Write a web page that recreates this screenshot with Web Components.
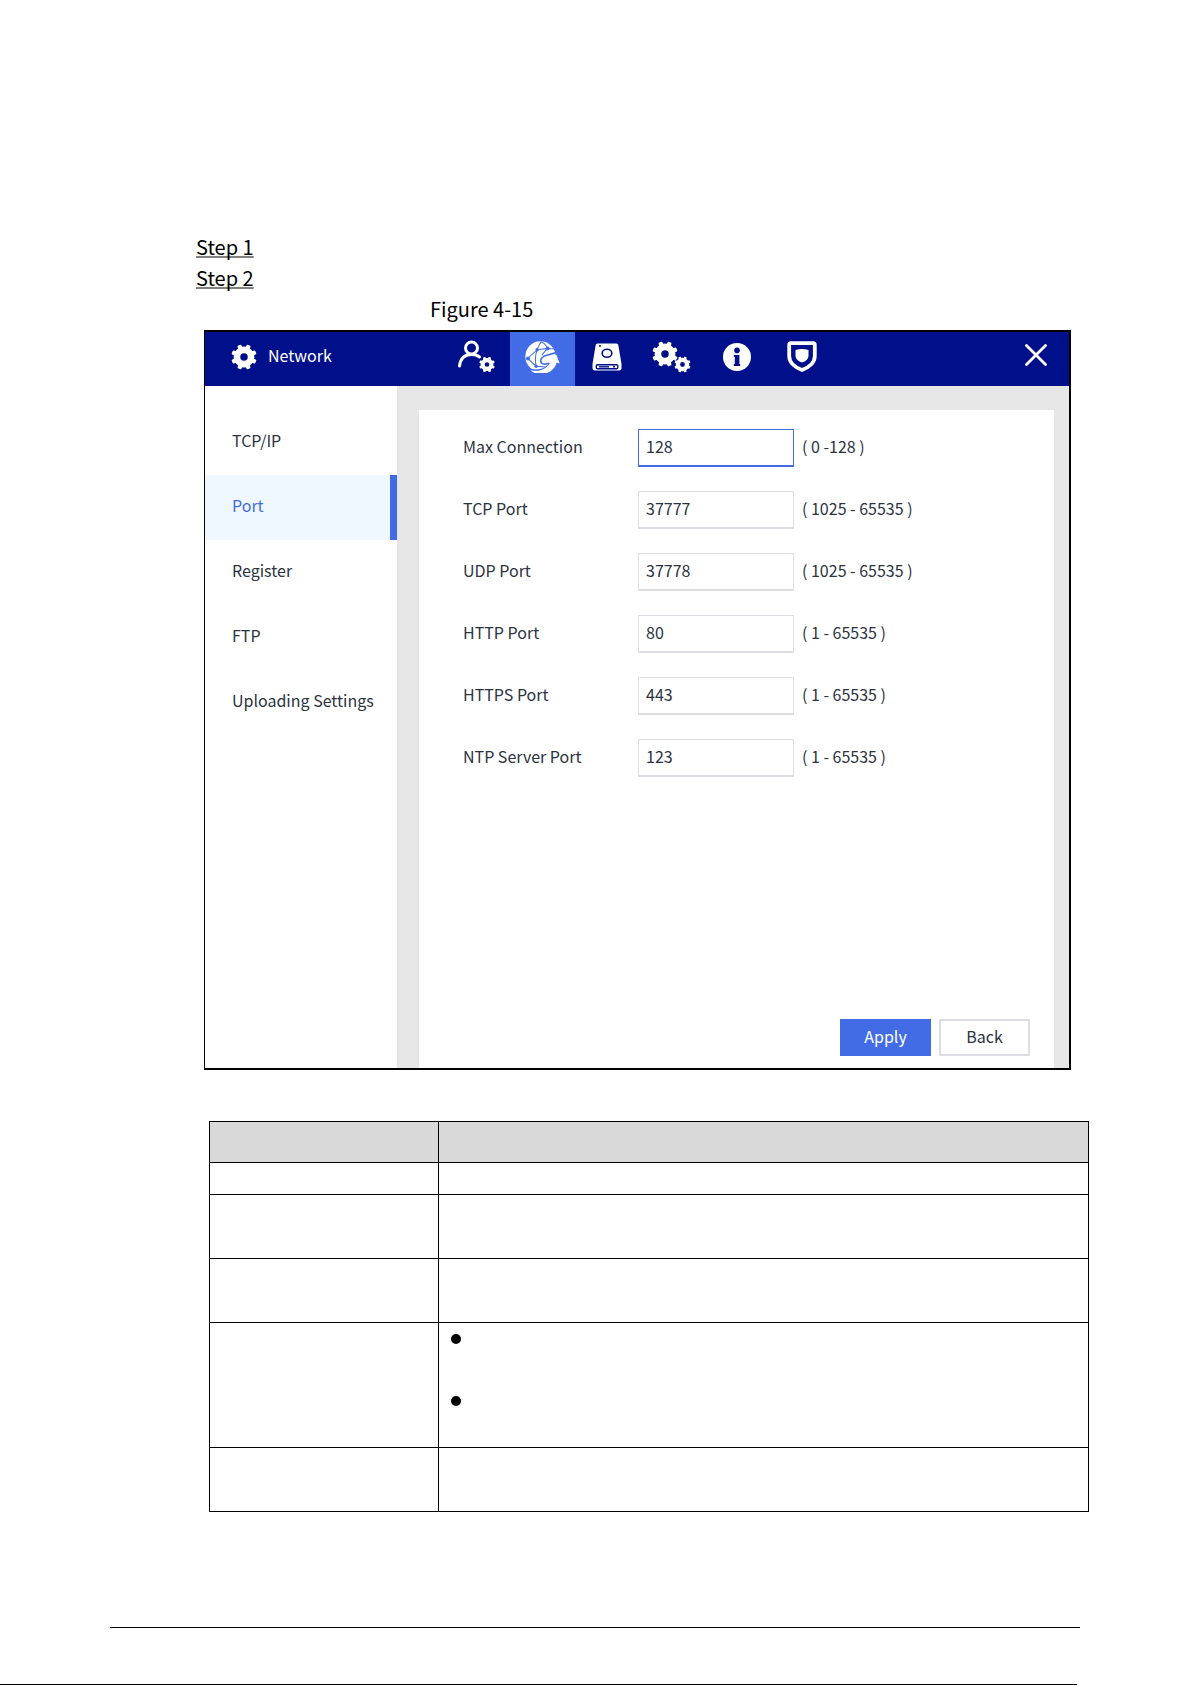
<!DOCTYPE html>
<html lang="en">
<head>
<meta charset="utf-8">
<title>Port settings</title>
<style>
    body {
        margin: 0;
        background: #fff;
        color: #000;
        font-family: "Noto Sans CJK SC", "Noto Sans", sans-serif;
        font-size: 16px;
    }
</style>
</head>
<body>

<manual-page>
    <step-label>Step 1</step-label>
    <step-label>Step 2</step-label>
    <figure-caption>Figure 4-15</figure-caption>
    <settings-dialog>
        <dialog-header slot="header" heading="Network"></dialog-header>
        <side-nav slot="nav"></side-nav>
        <port-form>
            <port-field label="Max Connection" value="128" range="( 0 -128 )" active></port-field>
            <port-field label="TCP Port" value="37777" range="( 1025 - 65535 )"></port-field>
            <port-field label="UDP Port" value="37778" range="( 1025 - 65535 )"></port-field>
            <port-field label="HTTP Port" value="80" range="( 1 - 65535 )"></port-field>
            <port-field label="HTTPS Port" value="443" range="( 1 - 65535 )"></port-field>
            <port-field label="NTP Server Port" value="123" range="( 1 - 65535 )"></port-field>
        </port-form>
    </settings-dialog>
    <param-table></param-table>
    <page-footer slot="footer"></page-footer>
</manual-page>

<script>
class BaseElement extends HTMLElement {

    constructor(){
        super();
        this.shadow = this.attachShadow({ mode: 'open' });
    }

    connectedCallback(){
        this.render();
    }
}

// ring with eight teeth around it
function gear(cx, cy, size) {
    let teeth = "";
    for (let i = 0; i < 8; i++) {
        teeth += `<path d="M-2.5 -8 L-1.9 -11.6 Q-1.8 -12.2 -1.2 -12.2 H1.2 Q1.8 -12.2 1.9 -11.6 L2.5 -8 Z" transform="rotate(${i * 45 + 22.5})"/>`;
    }
    return `<g transform="translate(${cx} ${cy}) scale(${size / 24})" fill="#fff">
        <circle r="6.8" fill="none" stroke="#fff" stroke-width="6.4"/>${teeth}</g>`;
}

const ICONS = {
    gear: { box: "0 0 26 26", width: 26, body: gear(13, 13, 25) },
    user: {
        box: "0 0 40 34", width: 40,
        body: `<circle cx="14.5" cy="8" r="6" fill="none" stroke="#fff" stroke-width="3"/>
            <path d="M2.5 26 C3.5 18 8 14.6 14.5 14.6 C18 14.6 20.5 15.4 22.5 17" fill="none" stroke="#fff" stroke-width="3" stroke-linecap="round"/>
            ${gear(30, 24.5, 15.5)}`
    },
    globe: {
        box: "0 0 104 98", width: 35,
        body: `<circle cx="46" cy="46" r="45" fill="#fff"/>
            <g fill="none" stroke="#426ce6" stroke-width="3">
                <path d="M48 2 C44 10 38 18 36 26 L8 52 L33 75 L60 77 M48 2 C58 6 64 14 67 22 L92 24 M36 26 L67 22 L50 42 M36 26 C30 42 30 60 33 75"/>
            </g>
            <g fill="#426ce6">
                <circle cx="36" cy="26" r="5"/>
                <circle cx="67" cy="22" r="6"/>
                <circle cx="9" cy="52" r="6"/>
                <circle cx="33" cy="75" r="5"/>
                <path d="M70 66 C62 78 52 83 38 84 L10 84 L26 99 L104 99 V66 Z"/>
            </g>
            <path d="M54 57 C60 49 74 48 93 41 L103 67 L94 64 C88 86 70 98 46 98 C32 98 22 93 16 87 C42 93 66 84 76 60 Z" fill="#fff"/>
            <path d="M98 33 L62 43 C42 50 42 68 60 69 L72 66" fill="none" stroke="#426ce6" stroke-width="5"/>`
    },
    disk: {
        box: "0 0 30 28", width: 30,
        body: `<path d="M5.5 .5 H24.5 Q26 .5 26.3 2 L29.5 21 V25 Q29.5 27.5 27 27.5 H3 Q.5 27.5 .5 25 V21 L3.7 2 Q4 .5 5.5 .5 Z" fill="#fff"/>
            <ellipse cx="15" cy="10.3" rx="4.8" ry="4" fill="none" stroke="#000f8a" stroke-width="1.6"/>
            <circle cx="8" cy="3" r="1" fill="#000f8a"/>
            <rect x="4.3" y="21.8" width="21.5" height="4" rx="1.2" fill="none" stroke="#000f8a" stroke-width="1.4"/>
            <path d="M7 23.8 H17" stroke="#000f8a" stroke-width="1.4"/>
            <circle cx="22" cy="23.8" r="1" fill="#000f8a"/>`
    },
    gears: { box: "0 0 40 34", width: 40, body: gear(13, 14, 25) + gear(30.5, 24.5, 16) },
    info: {
        box: "0 0 28 28", width: 28,
        body: `<circle cx="14" cy="14" r="14" fill="#fff"/>
            <circle cx="14" cy="7.4" r="2.8" fill="#000f8a"/>
            <path d="M10.8 12 H16.4 V21 H17.2 V23 H10.8 V21 H11.8 V14 H10.8 Z" fill="#000f8a"/>`
    },
    shield: {
        box: "0 0 30 32", width: 30,
        body: `<path d="M2.2 3.8 Q2.2 2.2 3.8 2.2 H26.2 Q27.8 2.2 27.8 3.8 V15 C27.8 21.5 22 26.5 15 29 C8 26.5 2.2 21.5 2.2 15 Z" fill="none" stroke="#fff" stroke-width="3.8"/>
            <path d="M8.5 9 Q15 7 21.5 9 V14.5 C21.5 18 18.5 20.4 15 21.6 C11.5 20.4 8.5 18 8.5 14.5 Z" fill="#fff"/>`
    },
    close: {
        box: "0 0 22 22", width: 22,
        body: `<path d="M1.5 1.5 L20.5 20.5 M20.5 1.5 L1.5 20.5" stroke="#fff" stroke-width="2.8" stroke-linecap="round"/>`
    }
};

class AppIcon extends BaseElement {
    render() {
        let icon = ICONS[this.getAttribute("name")];
        this.shadow.innerHTML =
        `
        <style>
            :host { display: block; }
            svg { display: block; }
        </style>
        <svg viewBox="${icon.box}" width="${icon.width}" aria-hidden="true">${icon.body}</svg>
        `
    }
}

class ManualPage extends BaseElement {
    render() {
        this.shadow.innerHTML =
        `
        <style>
            :host {
                display: flex;
                flex-direction: column;
            }
            main {
                padding: 231px 103px 0 196px;
            }
        </style>
        <main><slot></slot></main>
        <slot name="footer"></slot>
        `
    }
}

class StepLabel extends BaseElement {
    render() {
        this.shadow.innerHTML =
        `
        <style>
            :host {
                display: block;
                font-size: 20px;
                line-height: 31px;
            }
            span {
                text-decoration: underline 2px #7f7f7f;
                text-decoration-skip-ink: none;
                text-underline-offset: 1px;
            }
        </style>
        <span><slot></slot></span>
        `
    }
}

class FigureCaption extends BaseElement {
    render() {
        this.shadow.innerHTML =
        `
        <style>
            :host {
                display: block;
                padding-left: 234px;
                font-size: 20px;
                line-height: 31px;
            }
        </style>
        <slot></slot>
        `
    }
}

class SettingsDialog extends BaseElement {
    render() {
        this.shadow.innerHTML =
        `
        <style>
            :host {
                display: block;
                margin: 6px 18px 0 8px;
                border: 2px solid #000;
                border-left-width: 1px;
                color: #2b333f;
            }
            .body {
                display: flex;
                min-height: 682px;
            }
            .content {
                flex: 1;
                display: flex;
                padding: 24px 15px 0 22px;
                background: #e6e6e6;
            }
        </style>
        <slot name="header"></slot>
        <div class="body">
            <slot name="nav"></slot>
            <div class="content"><slot></slot></div>
        </div>
        `
    }
}

class DialogHeader extends BaseElement {
    render() {
        let tabs = [
            ["user", "Account"],
            ["globe", "Network"],
            ["disk", "Storage"],
            ["gears", "System"],
            ["info", "Information"],
            ["shield", "Security"]
        ];

        this.shadow.innerHTML =
        `
        <style>
            :host {
                display: flex;
                height: 54px;
                background: #000f8a;
                color: #fff;
            }
            .heading {
                display: flex;
                align-items: center;
                gap: 11px;
                width: 214px;
                padding: 0 0 4px 26px;
            }
            h1 {
                margin: 0;
                padding-bottom: 4px;
                font-size: 16px;
                font-weight: 400;
                line-height: 24px;
            }
            nav {
                display: flex;
            }
            button {
                display: flex;
                align-items: center;
                justify-content: center;
                width: 65px;
                padding: 0 1px 4px 0;
                border: 0;
                background: transparent;
                cursor: pointer;
            }
            button.active {
                background: #426ce6;
            }
            .close {
                width: 22px;
                margin: 0 22px 0 auto;
                padding: 0 0 8px;
            }
        </style>
        <div class="heading">
            <app-icon name="gear"></app-icon>
            <h1>${this.getAttribute("heading")}</h1>
        </div>
        <nav>
            ${tabs.map(([icon, title]) => `<button type="button" aria-label="${title}"><app-icon name="${icon}"></app-icon></button>`).join("")}
        </nav>
        <button type="button" class="close" aria-label="Close"><app-icon name="close"></app-icon></button>
        `

        let buttons = this.shadow.querySelectorAll("nav button");
        buttons[1].classList.add("active");

        buttons.forEach((button) => {
            button.addEventListener("click", () => {
                buttons.forEach((other) => other.classList.toggle("active", other === button));
            })
        })
    }
}

class SideNav extends BaseElement {
    render() {
        this.shadow.innerHTML =
        `
        <style>
            :host {
                display: block;
                width: 192px;
                padding-top: 24px;
                box-sizing: border-box;
                background: #fff;
            }
            a {
                display: block;
                padding: 0 0 4px 27px;
                color: inherit;
                line-height: 61px;
                text-decoration: none;
                white-space: nowrap;
            }
            a.active {
                border-right: 7px solid #426ce6;
                background: #eff7ff;
                color: #426ce6;
            }
        </style>
        <a href="#tcpip">TCP/IP</a>
        <a href="#port" class="active">Port</a>
        <a href="#register">Register</a>
        <a href="#ftp">FTP</a>
        <a href="#uploading">Uploading Settings</a>
        `
    }
}

class PortForm extends BaseElement {
    render() {
        this.shadow.innerHTML =
        `
        <style>
            :host {
                flex: 1;
                display: flex;
            }
            form {
                flex: 1;
                display: flex;
                flex-direction: column;
                justify-content: space-between;
                padding: 19px 24px 12px 44px;
                background: #fff;
            }
            .fields {
                display: flex;
                flex-direction: column;
                gap: 24px;
            }
            .actions {
                display: flex;
                justify-content: flex-end;
                gap: 8px;
            }
            button {
                width: 91px;
                height: 37px;
                padding: 0 0 4px;
                border: 2px solid #dddde6;
                background: #fff;
                color: inherit;
                font: inherit;
                line-height: 24px;
            }
            .primary {
                border-color: #426ce6;
                background: #426ce6;
                color: #fff;
            }
        </style>
        <form>
            <div class="fields"><slot></slot></div>
            <div class="actions">
                <button type="button" class="primary">Apply</button>
                <button type="button">Back</button>
            </div>
        </form>
        `
    }
}

class PortField extends BaseElement {
    render() {
        this.shadow.innerHTML =
        `
        <style>
            :host {
                display: flex;
                align-items: center;
                line-height: 24px;
            }
            label, span {
                padding-bottom: 4px;
            }
            label {
                width: 175px;
            }
            input {
                width: 156px;
                height: 38px;
                box-sizing: border-box;
                margin: 0 8px 0 0;
                padding: 0 7px 4px;
                border: 1px solid #dddde6;
                border-bottom-width: 2px;
                border-radius: 0;
                outline: 0;
                color: inherit;
                font: inherit;
            }
            :host([active]) input {
                border-color: #426ce6;
            }
        </style>
        <label for="value">${this.getAttribute("label")}</label>
        <input id="value" type="text" inputmode="numeric" value="${this.getAttribute("value")}">
        <span>${this.getAttribute("range")}</span>
        `
    }
}

class ParamTable extends BaseElement {
    render() {
        this.shadow.innerHTML =
        `
        <style>
            :host {
                display: block;
                margin: 51px 0 0 13px;
            }
            table {
                width: 100%;
                border-collapse: collapse;
                table-layout: fixed;
            }
            col.name {
                width: 229px;
            }
            th, td {
                height: 63px;
                padding: 0;
                border: 1px solid #000;
                vertical-align: top;
            }
            th {
                height: 40px;
                background: #d9d9d9;
            }
            .short td {
                height: 31px;
            }
            ul {
                margin: 0;
                padding: 0 0 0 12px;
                list-style: none;
            }
            li {
                height: 62px;
                padding-top: 11px;
                box-sizing: border-box;
            }
            li::before {
                content: "";
                display: block;
                width: 10px;
                height: 10px;
                border-radius: 50%;
                background: #000;
            }
        </style>
        <table>
            <colgroup><col class="name"><col></colgroup>
            <thead><tr><th></th><th></th></tr></thead>
            <tbody>
                <tr class="short"><td></td><td></td></tr>
                <tr><td></td><td></td></tr>
                <tr><td></td><td></td></tr>
                <tr><td></td><td><ul><li></li><li></li></ul></td></tr>
                <tr><td></td><td></td></tr>
            </tbody>
        </table>
        `
    }
}

class PageFooter extends BaseElement {
    render() {
        this.shadow.innerHTML =
        `
        <style>
            :host {
                display: block;
            }
            hr {
                margin: 115px 112px 56px 110px;
                border: 0;
                border-top: 1px solid #000;
            }
            hr.edge {
                margin: 0 115px 0 0;
            }
        </style>
        <hr>
        <hr class="edge">
        `
    }
}

customElements.define('app-icon', AppIcon);
customElements.define('manual-page', ManualPage);
customElements.define('step-label', StepLabel);
customElements.define('figure-caption', FigureCaption);
customElements.define('settings-dialog', SettingsDialog);
customElements.define('dialog-header', DialogHeader);
customElements.define('side-nav', SideNav);
customElements.define('port-form', PortForm);
customElements.define('port-field', PortField);
customElements.define('param-table', ParamTable);
customElements.define('page-footer', PageFooter);
</script>
</body>
</html>
